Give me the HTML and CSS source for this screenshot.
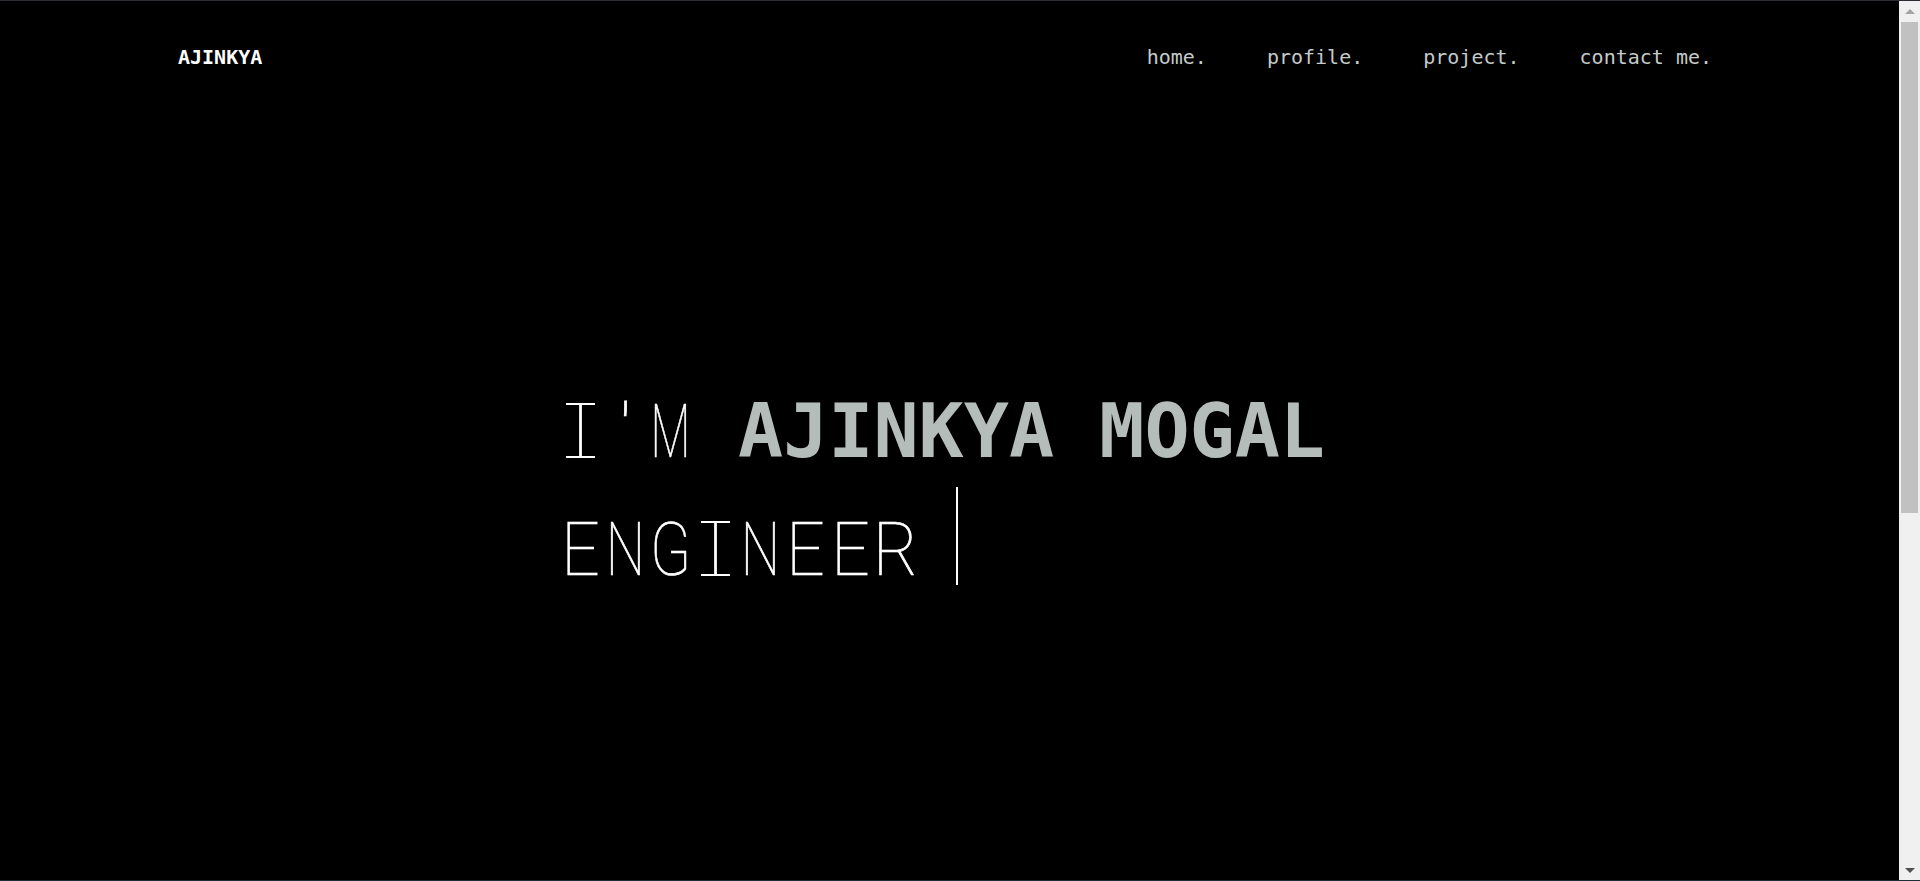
FILE: index.html
```html
<!DOCTYPE html>
<html lang="en">
<head>
<meta charset="utf-8">
<title>Ajinkya Mogal</title>
<link rel="stylesheet" href="styles.css">
</head>
<body>
<div class="page">
  <header class="topbar">
    <a class="logo" href="#">AJINKYA</a>
    <nav class="nav">
      <a class="nav-link" href="#">home.</a>
      <a class="nav-link" href="#">profile.</a>
      <a class="nav-link" href="#">project.</a>
      <a class="nav-link" href="#">contact me.</a>
    </nav>
  </header>
  <main>
    <section class="hero">
      <h1 class="hero-title">
        <span class="line"><span class="thin"><span class="c c-i">I</span><span class="c c-q">'</span><span class="c c-m">M</span><span class="c">&nbsp;</span></span><strong class="name">AJINKYA MOGAL</strong></span>
        <span class="line"><span class="thin"><span class="c c-e">E</span><span class="c c-n">N</span><span class="c c-g">G</span><span class="c c-i">I</span><span class="c c-n">N</span><span class="c c-e">E</span><span class="c c-e">E</span><span class="c c-r">R</span></span><span class="cursor"></span></span>
      </h1>
    </section>
    <section class="below"></section>
  </main>
</div>
<div class="scrollbar" aria-hidden="true">
  <div class="sb-btn"><span class="arrow-up"></span></div>
  <div class="sb-track"><div class="sb-thumb"></div></div>
  <div class="sb-btn"><span class="arrow-down"></span></div>
</div>
</body>
</html>
```
FILE: styles.css
```css
html, body {
  margin: 0;
  padding: 0;
  background: #000;
  height: 100%;
  overflow: hidden;
}
body {
  box-sizing: border-box;
  display: flex;
  border-top: 1px solid #2a2e33;
  border-bottom: 1px solid #1e2c39;
  color: #fff;
  font-family: "DejaVu Sans Mono", "Liberation Mono", monospace;
}
a {
  text-decoration: none;
  color: inherit;
}
.page {
  flex: 1;
  min-width: 0;
  overflow: hidden;
}
.topbar {
  height: 112px;
  display: flex;
  align-items: center;
  justify-content: space-between;
  padding: 0 187px 0 178px;
}
.logo {
  font-weight: bold;
  font-size: 20px;
  color: #fff;
}
.nav {
  display: flex;
  gap: 60px;
}
.nav-link {
  font-size: 20px;
  color: #c4cbcb;
  white-space: nowrap;
}
.hero {
  height: 768px;
  box-sizing: border-box;
  padding-top: 262px;
  display: flex;
  justify-content: center;
}
.hero-title {
  margin: 0 18px 0 0;
  font-size: 75px;
  line-height: 113px;
  font-weight: normal;
  width: 765px;
}
.line {
  display: block;
  white-space: nowrap;
}
.line + .line {
  margin-top: -1px;
}
.thin {
  font-family: Roboto, "Noto Sans", sans-serif;
  font-weight: 100;
  color: #fff;
  -webkit-text-stroke: 0.7px #fff;
}
.c {
  display: inline-flex;
  justify-content: center;
  width: 45px;
  transform: scaleX(0.8);
}
.c-i { transform: scaleX(1); position: relative; }
.c-i::before,
.c-i::after {
  content: "";
  position: absolute;
  left: 8px;
  right: 8px;
  height: 2px;
  background: #fff;
}
.c-i::before { top: 28px; }
.c-i::after { top: 81px; }
.c-q { transform: scaleX(1); }
.c-m { transform: scaleX(0.62); }
.c-e { transform: scaleX(0.9); }
.c-n { transform: scaleX(0.74); }
.c-g { transform: scaleX(0.8); }
.c-r { transform: scaleX(0.92); }
.name {
  font-family: "DejaVu Sans Mono", monospace;
  font-weight: bold;
  color: #b4bdb9;
}
.cursor {
  display: inline-block;
  width: 2px;
  height: 98px;
  background: #fff;
  margin-left: 38px;
  vertical-align: -10px;
}
.below {
  height: 640px;
}
.scrollbar {
  width: 21px;
  flex: none;
  background: #f0f0f0;
  display: flex;
  flex-direction: column;
}
.sb-btn {
  height: 20px;
  display: flex;
  align-items: center;
  justify-content: center;
  flex: none;
}
.arrow-up {
  width: 0;
  height: 0;
  border-left: 5px solid transparent;
  border-right: 5px solid transparent;
  border-bottom: 5px solid #a3a3a3;
}
.arrow-down {
  width: 0;
  height: 0;
  border-left: 5px solid transparent;
  border-right: 5px solid transparent;
  border-top: 5px solid #505050;
}
.sb-track {
  flex: 1;
  padding: 1px 2px 0;
}
.sb-thumb {
  height: 491px;
  background: #c1c1c1;
}
```
